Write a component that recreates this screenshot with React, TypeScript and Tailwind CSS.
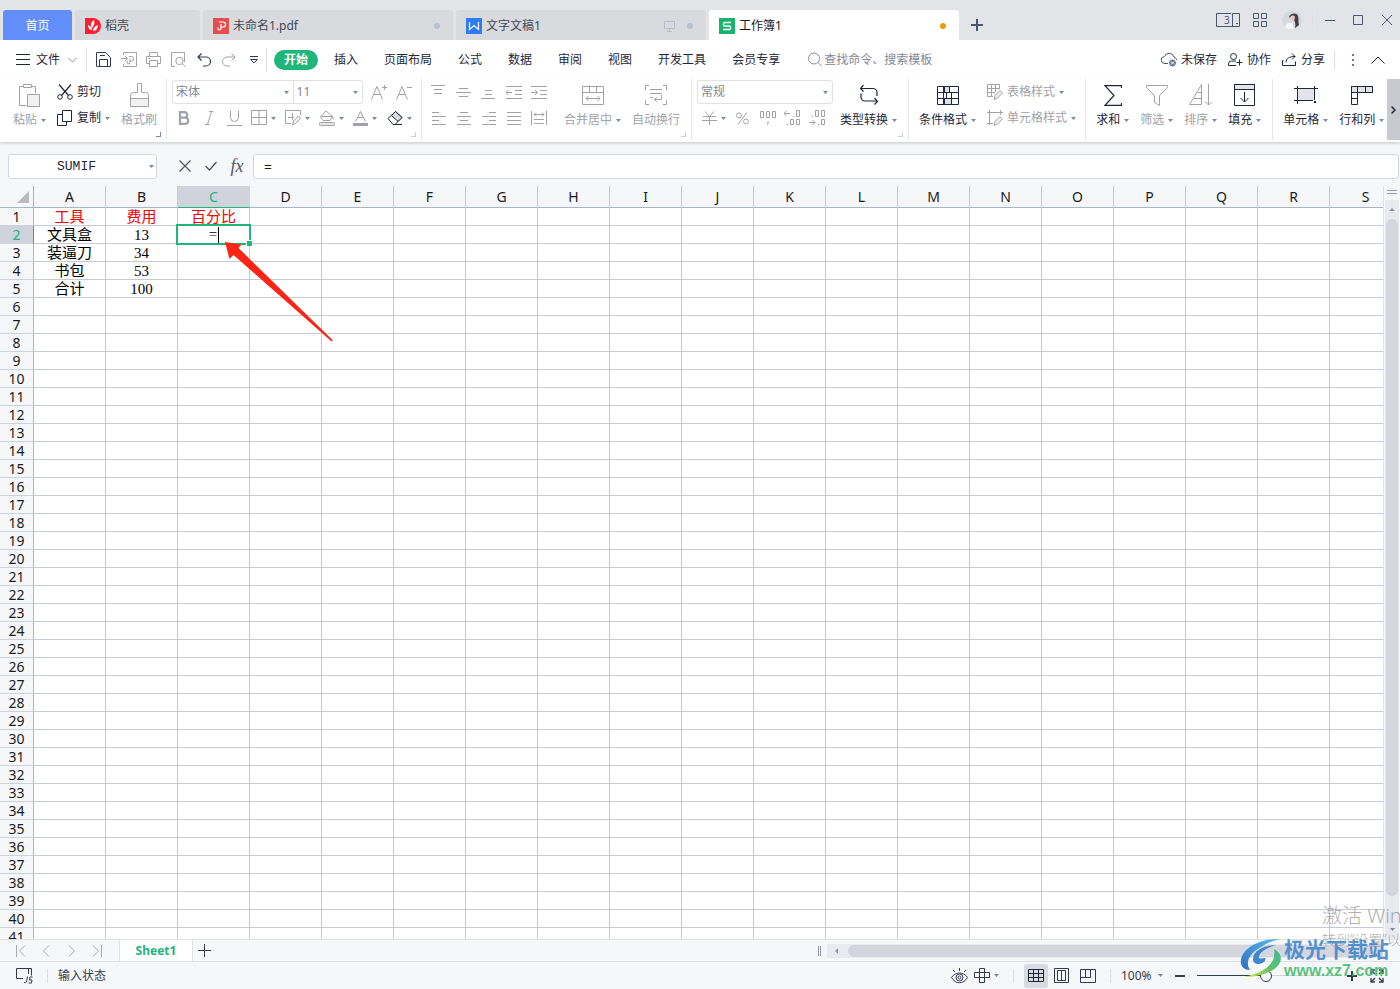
import { useState, type ReactNode } from 'react';

const COLUMNS = 'ABCDEFGHIJKLMNOPQRS'.split('');
const ROWS = Array.from({ length: 41 }, (_, i) => i + 1);

const CELLS: Record<string, string> = {
  A1: '工具', B1: '费用', C1: '百分比',
  A2: '文具盒', B2: '13',
  A3: '装逼刀', B3: '34',
  A4: '书包', B4: '53',
  A5: '合计', B5: '100',
};

const MENUS = ['插入', '页面布局', '公式', '数据', '审阅', '视图', '开发工具', '会员专享'];

const UI_FONT = "font-['Noto_Sans','Noto_Sans_CJK_SC',sans-serif]";
const CELL_FONT = "font-['Liberation_Serif','Noto_Sans_CJK_SC',serif]";

function Icon({ w = 16, h = 16, d, children }: { w?: number; h?: number; d?: string; children?: ReactNode }) {
  return (
    <svg width={w} height={h} viewBox={`0 0 ${w} ${h}`} fill="none" stroke="currentColor" className="shrink-0" aria-hidden="true">
      {d && <path d={d} />}
      {children}
    </svg>
  );
}

function Caret() {
  return (
    <svg width="5" height="3" viewBox="0 0 5 3" className="shrink-0 text-[#7b88a1]" aria-hidden="true">
      <path d="M0 0h5L2.5 3z" fill="currentColor" />
    </svg>
  );
}

function Group({ children, corner, className = '' }: { children: ReactNode; corner?: string; className?: string }) {
  return (
    <div className={`relative flex shrink-0 gap-[11px] border-r border-[#e6e8ec] pt-px ${className}`}>
      {children}
      {corner && (
        <span className={`absolute right-[5px] bottom-[3px] h-[5px] w-[5px] border-r border-b ${corner}`} />
      )}
    </div>
  );
}

function BigButton({ label, icon, caret = true, muted }: { label: string; icon: ReactNode; caret?: boolean; muted?: boolean }) {
  return (
    <button className={`flex shrink-0 flex-col items-center ${muted ? 'text-[#a0a2a8]' : 'text-[#1f2737]'}`}>
      <span className="flex h-[30px] items-center">{icon}</span>
      <span className="flex h-5 items-center gap-1 whitespace-nowrap">
        {label}
        {caret && <Caret />}
      </span>
    </button>
  );
}

function RowButton({ label, icon, caret, muted }: { label: string; icon: ReactNode; caret?: boolean; muted?: boolean }) {
  return (
    <button className={`flex h-6 items-center gap-1 whitespace-nowrap ${muted ? 'text-[#a0a2a8]' : 'text-[#1f2737]'}`}>
      {icon}
      {label}
      {caret && <Caret />}
    </button>
  );
}

function ToolButton({ label, children, dark }: { label: string; children: ReactNode; dark?: boolean }) {
  return (
    <button aria-label={label} className={`flex h-6 w-[25px] items-center justify-center ${dark ? 'text-[#333c4f]' : 'text-[#a0a2a8]'}`}>
      {children}
    </button>
  );
}

function DropButton({ label, children, dark }: { label: string; children: ReactNode; dark?: boolean }) {
  return (
    <button aria-label={label} className={`flex h-6 w-[34px] items-center justify-center gap-1 ${dark ? 'text-[#1f2737]' : 'text-[#a0a2a8]'}`}>
      {children}
      <Caret />
    </button>
  );
}

function Combo({ label, value, className }: { label: string; value: string; className: string }) {
  return (
    <div className={`relative h-6 border border-[#dfe1e6] bg-white ${className}`}>
      <select aria-label={label} defaultValue={value} className="h-full w-full appearance-none bg-transparent px-[3px] text-[#85888f] outline-none">
        <option>{value}</option>
      </select>
      <span className="pointer-events-none absolute top-[10px] right-1">
        <Caret />
      </span>
    </div>
  );
}

function Divider({ className = 'h-5' }: { className?: string }) {
  return <span className={`w-px shrink-0 bg-[#dcdfe5] ${className}`} />;
}

function DocTab({ title, icon, children, active, width }: { title: string; icon: ReactNode; children?: ReactNode; active?: boolean; width: string }) {
  return (
    <button
      className={`flex h-[30px] items-center rounded-t-[3px] pt-px pr-[13px] pl-[10px] ${width} ${
        active ? 'bg-white text-[#1b1b1b]' : 'bg-[#d9dade] text-[#414957]'
      }`}
    >
      {icon}
      <span className="ml-1 flex-1 text-left whitespace-nowrap">{title}</span>
      {children}
    </button>
  );
}

function TitleBar() {
  return (
    <header className="flex h-10 shrink-0 items-end gap-[3px] bg-[#e3e4e8] pl-[3px]">
      <button className="h-[30px] w-[69px] rounded-t-[3px] bg-[#628efa] pt-px text-white">首页</button>
      <DocTab
        title="稻壳"
        width="w-[125px]"
        icon={
          <Icon>
            <path d="M0 0h8a8 8 0 0 1 0 16H0z" fill="#fb2132" stroke="none" />
            <path d="M7 12C4 12 3 9 3 7c2 1 4 2 4 5zM7 10C5 7 6 4 9 2c1 3 0 6-2 8zM8 13c0-3 2-5 5-6 0 3-2 6-5 6z" fill="#fff" stroke="none" />
          </Icon>
        }
      />
      <DocTab
        title="未命名1.pdf"
        width="w-[250px]"
        icon={
          <Icon>
            <path d="M0 0h16v16H0z" fill="#e54f50" stroke="none" />
            <path d="M6 4h4a2.500 2.500 0 0 1 0 5H7M8 6v4.500a1.500 1.500 0 1 1-3 0v-1" stroke="#fff" strokeWidth="1.200" />
          </Icon>
        }
      >
        <span className="h-[6px] w-[6px] rounded-full bg-[#b7c1d3]" />
      </DocTab>
      <DocTab
        title="文字文稿1"
        width="w-[250px]"
        icon={
          <Icon>
            <path d="M0 0h16v16H0z" fill="#2f7bf0" stroke="none" />
            <path d="M3.500 4v7.500L8 7.500l4.500 4V4" stroke="#fff" strokeWidth="1.200" />
          </Icon>
        }
      >
        <span className="mr-3 text-[#b3bdd0]">
          <Icon w={11} h={12} d="M.5 1.500h10v7H.5zM5.500 8.500v3M3 11.500h5" />
        </span>
        <span className="h-[6px] w-[6px] rounded-full bg-[#b7c1d3]" />
      </DocTab>
      <DocTab
        title="工作簿1"
        width="w-[250px]"
        active
        icon={
          <Icon>
            <path d="M0 0h16v16H0z" fill="#17b36f" stroke="none" />
            <path d="M12 4.500H5.500a1 1 0 0 0-1 1V7a1 1 0 0 0 1 1h5a1 1 0 0 1 1 1v1.500a1 1 0 0 1-1 1H4" stroke="#fff" strokeWidth="1.300" />
          </Icon>
        }
      >
        <span className="h-[6px] w-[6px] rounded-full bg-[#eb9a0a]" />
      </DocTab>
      <button aria-label="新建标签" className="flex h-[30px] w-[30px] items-center justify-center text-[#4a5871]">
        <Icon w={12} h={12}>
          <path d="M6 0v12M0 6h12" strokeWidth="2" />
        </Icon>
      </button>
      <div className="ml-auto flex h-full shrink-0 items-center pr-2 text-[#4a5871]">
        <button aria-label="窗口列表" className="mr-[13px]">
          <Icon w={24} h={14}>
            <path d="M15 .5H.5v13H23.500V.5h-7v13M20 10.500h2" />
            <text x="8" y="11" fontSize="10" fill="currentColor" stroke="none">3</text>
          </Icon>
        </button>
        <button aria-label="应用" className="mr-[15px]">
          <Icon w={14} h={14} d="M.5.5h5v5h-5zM8.500.5h5v5h-5zM.5 8.500h5v5h-5zM8.500 8.500h5v5h-5z" />
        </button>
        <button aria-label="账户" className="mr-[10px]">
          <Icon w={20} h={20}>
            <circle cx="10" cy="10" r="10" fill="#d2dce0" stroke="none" />
            <path d="M7 7c1-4 8-5 9-1 1 3 0 6 1 9l-4 3c1-4 0-6-1-8z" fill="#4b3b42" stroke="none" />
            <path d="M8 8c1-3 4-3 5-1l-1 4-3 1z" fill="#ecc9bd" stroke="none" />
            <path d="M3 17c1-4 4-5 7-4l2 6c-4 1-7 0-9-2z" fill="#f5f6f8" stroke="none" />
          </Icon>
        </button>
        <Divider className="h-5 bg-[#c9ccd3]" />
        <button aria-label="最小化" className="ml-3">
          <Icon w={10} h={10} d="M0 5.500h10" />
        </button>
        <button aria-label="最大化" className="ml-[18px]">
          <Icon w={10} h={10} d="M.5.5h9v9h-9z" />
        </button>
        <button aria-label="关闭" className="ml-[19px]">
          <Icon w={10} h={10} d="M0 0l10 10M10 0L0 10" />
        </button>
      </div>
    </header>
  );
}

function MenuBar() {
  return (
    <nav className="flex h-[39px] shrink-0 items-center bg-white pl-4 text-[#1f2737]">
      <button className="flex items-center">
        <Icon w={14} h={11} d="M0 .5h14M0 5.500h14M0 10.500h14" />
        <span className="mr-2 ml-[6px]">文件</span>
        <span className="text-[#8a8f99]">
          <Icon w={9} h={6} d="M0 .5l4.500 4.500L9 .5" />
        </span>
      </button>
      <Divider className="mr-1 ml-[9px] h-6" />
      <ToolButton label="保存" dark>
        <Icon w={15} h={15} d="M1.500 14.500h-1V.5h9l5 5v9h-13M3.500 14V7.500h8V14M4 3.500h5" />
      </ToolButton>
      <ToolButton label="输出为PDF">
        <Icon d="M2.500 3V.5h13v14h-13V12M0 6.500h6M4 4l2.500 2.500L4 9M8 4.500h2.500a2 2 0 0 1 0 4.500H9M9 6.500V10a1.500 1.500 0 1 1-2-1" />
      </ToolButton>
      <ToolButton label="打印">
        <Icon w={15} h={15} d="M3.500 4V.5h8V4M3 11.500H.5v-7h14v7H12M3.500 8.500h8v6h-8zM2.500 6.500h2" />
      </ToolButton>
      <ToolButton label="打印预览">
        <Icon w={15} h={16}>
          <path d="M4 14.500H.5V.5h13V10M11 11.500l3.500 3.500" />
          <circle cx="8.500" cy="9" r="3.700" />
        </Icon>
      </ToolButton>
      <ToolButton label="撤消" dark>
        <Icon w={14} h={14}>
          <path d="M4.500.5L1 4l3.500 3.500M1 4h8a4.500 4.500 0 0 1 0 9H6" strokeWidth="1.200" />
        </Icon>
      </ToolButton>
      <ToolButton label="恢复">
        <Icon w={14} h={14} d="M9.500.5L13 4 9.500 7.500M13 4H5a4.500 4.500 0 0 0 0 9h3" />
      </ToolButton>
      <ToolButton label="更多" dark>
        <Icon w={8} h={8} d="M0 .5h8M.5 3.500L4 7l3.500-3.500z" />
      </ToolButton>
      <Divider className="mr-[7px] h-6" />
      <button className="mr-[3px] h-5 w-11 rounded-full bg-[#20b57a] font-bold text-white">开始</button>
      {MENUS.map((name) => (
        <button key={name} className="px-[13px] whitespace-nowrap">{name}</button>
      ))}
      <label className="ml-[15px] flex items-center gap-[2px] text-[#8490a6]">
        <Icon w={14} h={15}>
          <circle cx="6" cy="6.500" r="5.500" />
          <path d="M10 10.500l4 4" />
        </Icon>
        <input aria-label="搜索" placeholder="查找命令、搜索模板" className="w-[120px] outline-none placeholder:text-[#7f8899]" />
      </label>
      <div className="ml-auto flex shrink-0 items-center pr-[15px]">
        <button className="mr-[11px] flex items-center gap-1">
          <Icon w={16} h={15}>
            <path d="M7 11.500H4a3.500 3.500 0 0 1-.5-7A5 5 0 0 1 13 5c1.500.5 2.500 1.500 2.500 3" stroke="#4a5467" />
            <circle cx="11.500" cy="11" r="4" fill="#6a7793" stroke="#fff" />
            <path d="M10 9.500l3 3M13 9.500l-3 3" stroke="#fff" />
          </Icon>
          未保存
        </button>
        <button className="mr-[11px] flex items-center gap-1">
          <Icon w={15} h={14} d="M5.500.5a3 3 0 1 1 0 6 3 3 0 0 1 0-6zM8 12.500H.5V11a3 3 0 0 1 3-3H8M8.500 9.500h6M11.500 6.500v6" />
          协作
        </button>
        <button className="mr-[9px] flex items-center gap-1">
          <Icon w={15} h={14} d="M1.500 7.500H.5v5h13v-4M4 9.500c0-4 3-6 9-6M10 .5l3 3-3 3" />
          分享
        </button>
        <Divider />
        <button aria-label="更多选项" className="mr-[17px] ml-[17px]">
          <Icon w={2} h={12}>
            <path d="M0 0h2v2H0zM0 5h2v2H0zM0 10h2v2H0z" fill="#6a7793" stroke="none" />
          </Icon>
        </button>
        <button aria-label="收起功能区">
          <Icon w={14} h={8} d="M.5 7.500L7 1l6.500 6.500" />
        </button>
      </div>
    </nav>
  );
}

function Ribbon() {
  return (
    <div className="flex shrink-0 border-b border-[#d9dbe0] bg-white pb-[2px] shadow-sm">
      <div className="flex h-[61px] min-w-0 flex-1 overflow-hidden">
        <Group corner="border-[#7b88a1]" className="pr-[9px] pl-[13px]">
          <BigButton
            muted
            label="粘贴"
            icon={
              <Icon w={21} h={23}>
                <path d="M7.500 21.500h-7V2.500h4M12 2.500h4.500V9M4.500.5h8v3h-8z" />
                <path d="M8.500 10.500h12v12h-12z" fill="#f1f1f2" />
              </Icon>
            }
          />
          <div className="flex flex-col gap-[2px]">
            <RowButton
              label="剪切"
              icon={
                <Icon>
                  <circle cx="3" cy="13" r="2.300" />
                  <circle cx="13" cy="13" r="2.300" />
                  <path d="M2 .5l9.500 11M14 .5l-9.500 11" strokeWidth="1.200" />
                </Icon>
              }
            />
            <RowButton caret label="复制" icon={<Icon d="M5.500.5h9v11h-9zM5 4.500H.5v11h9V12" />} />
          </div>
          <BigButton
            muted
            caret={false}
            label="格式刷"
            icon={
              <Icon w={19} h={24}>
                <path d="M.5 15.500h18v8H.5z" fill="#f1f1f2" />
                <path d="M7.500.5h4v9h4a3 3 0 0 1 3 3v3H.5v-3a3 3 0 0 1 3-3h4z" />
              </Icon>
            }
          />
        </Group>

        <Group corner="border-[#c9ced9]" className="px-[5px]">
          <div className="flex w-[244px] flex-col gap-[2px]">
            <div className="flex">
              <Combo label="字体" value="宋体" className="w-[122px] rounded-l-[3px]" />
              <Combo label="字号" value="11" className="mr-[3px] w-[70px] rounded-r-[3px] border-l-0" />
              <ToolButton label="增大字号">
                <Icon d="M.5 15.500L6 2.500l5.500 13M2.500 10.500h7M13.500 1v5M11 3.500h5" />
              </ToolButton>
              <ToolButton label="减小字号">
                <Icon d="M.5 15.500L6 2.500l5.500 13M2.500 10.500h7M11 3.500h5" />
              </ToolButton>
            </div>
            <div className="flex">
              <ToolButton label="加粗">
                <Icon w={12} h={14}>
                  <path d="M2 1.200h4.500a2.700 2.700 0 0 1 0 5.400H2zM2 6.600h5.200a3 3 0 0 1 0 6.200H2z" strokeWidth="2.200" />
                </Icon>
              </ToolButton>
              <ToolButton label="倾斜">
                <Icon w={9} h={14} d="M4 .5h4.500M0 13.500h4.500M6.500.5l-4 13" />
              </ToolButton>
              <ToolButton label="下划线">
                <Icon w={15} h={15} d="M3.500 0v6.500a4 4 0 0 0 8 0V0M0 14.500h15" />
              </ToolButton>
              <DropButton label="边框">
                <Icon d="M.5.5h15v14H.5zM8 .5v14M.5 7.500h15" />
              </DropButton>
              <DropButton label="绘图边框">
                <Icon>
                  <path d="M15.500 5V.5H.5v13H6M7.500 3v7M3 7.500h6" />
                  <path d="M7.500 15l1-4 5-5 2 2.500-5 5z" fill="#f1f1f2" />
                </Icon>
              </DropButton>
              <DropButton label="填充颜色">
                <Icon>
                  <path d="M7 1l6.500 5.500-2.500 4H4L1.500 7zM2 6.500h12M13.500 6.500l1 3" />
                  <path d="M1.500 12.500h13a1.500 1.500 0 0 1 0 3h-13a1.500 1.500 0 0 1 0-3z" fill="#e6e6e8" />
                </Icon>
              </DropButton>
              <DropButton label="字体颜色">
                <Icon w={15} h={15}>
                  <path d="M2.500 10.500L7.500.5l5 10M4.500 6.500h6" />
                  <path d="M0 12h15v3H0z" fill="currentColor" stroke="none" />
                </Icon>
              </DropButton>
              <DropButton label="清除" dark>
                <Icon>
                  <path d="M1 8.500L8.500 1.500 15 7.500 8 14.500H6z" />
                  <path d="M4.500 5.500l6.500 6 4-4-6.500-6z" fill="#d9dade" />
                  <path d="M6 14.500h9" />
                </Icon>
              </DropButton>
            </div>
          </div>
        </Group>

        <Group corner="border-[#c9ced9]" className="pr-[11px] pl-1">
          <div className="flex w-[127px] flex-col gap-[2px]">
            <div className="flex">
              <ToolButton label="顶端对齐"><Icon w={15} h={14} d="M0 .5h14M3 4.500h8M3 8.500h8" /></ToolButton>
              <ToolButton label="垂直居中"><Icon w={15} h={10} d="M3 1.500h9M0 5.500h15M3 9.500h9" /></ToolButton>
              <ToolButton label="底端对齐"><Icon w={15} h={14} d="M4 5.500h7M4 9.500h7M0 13.500h14" /></ToolButton>
              <ToolButton label="减少缩进"><Icon h={13} d="M0 .5h16M9 4.500h7M9 8.500h7M0 12.500h16M0 6.500h6M2.500 4L0 6.500 2.500 9" /></ToolButton>
              <ToolButton label="增加缩进"><Icon h={13} d="M0 .5h16M9 4.500h7M9 8.500h7M0 12.500h16M0 6.500h6M4 4l2.500 2.500L4 9" /></ToolButton>
            </div>
            <div className="flex">
              <ToolButton label="左对齐"><Icon w={14} h={13} d="M0 .5h7M0 4.500h14M0 8.500h7M0 12.500h14" /></ToolButton>
              <ToolButton label="居中"><Icon w={14} h={13} d="M3 .5h8M0 4.500h14M3 8.500h8M0 12.500h14" /></ToolButton>
              <ToolButton label="右对齐"><Icon w={14} h={13} d="M7 .5h7M0 4.500h14M7 8.500h7M0 12.500h14" /></ToolButton>
              <ToolButton label="两端对齐"><Icon w={14} h={13} d="M0 .5h14M0 4.500h14M0 8.500h14M0 12.500h14" /></ToolButton>
              <ToolButton label="分散对齐"><Icon h={14} d="M.5 0v14M15.500 0v14M3 3.500h10M5 1.500l-2 2 2 2M11 1.500l2 2-2 2M3 8.500h10M3 12.500h10" /></ToolButton>
            </div>
          </div>
          <BigButton muted label="合并居中" icon={<Icon w={22} h={19} d="M.5.5h21v18H.5zM.5 6.500h21M7.500.5v6M14.500.5v6M4 12.500h14M6.500 10L4 12.500 6.500 15M15.500 10l2.500 2.500-2.500 2.500" />} />
          <BigButton muted caret={false} label="自动换行" icon={<Icon w={22} h={20} d="M4 .5H.5V5M18 .5h3.500V5M.5 15v4.500H4M21.500 15v4.500H18M5 4.500h12M5 8.500h12M16.500 10v4.500h-7M12 12l-2.500 2.500L12 17M5 12.500h3" />} />
        </Group>

        <Group corner="border-[#c9ced9]" className="pr-[11px] pl-[5px]">
          <div className="flex w-[132px] flex-col gap-[2px]">
            <Combo label="数字格式" value="常规" className="w-[136px] rounded-[3px]" />
            <div className="flex">
              <DropButton label="货币"><Icon w={15} h={14} d="M3 .5l4.500 5L12 .5M1 5.500h13M0 9.500h15M7.500 5.500V14" /></DropButton>
              <ToolButton label="百分比">
                <Icon w={13} h={13}>
                  <circle cx="3" cy="3.500" r="2.500" />
                  <circle cx="10" cy="9.500" r="2.500" />
                  <path d="M11 .5L2 12.500" />
                </Icon>
              </ToolButton>
              <ToolButton label="千位分隔"><Icon w={17} h={15} d="M1.500.5h3v6h-3zM7.500.5h3v6h-3zM13.500.5h3v6h-3zM9 10v2.500L8 14" /></ToolButton>
              <ToolButton label="增加小数"><Icon d="M0 3.500h6M2.500 1L0 3.500 2.500 6M9.500 6v1M12.500.5h3v6h-3zM3.500 14v1M6.500 9.500h3v5h-3zM12.500 9.500h3v5h-3z" /></ToolButton>
              <ToolButton label="减少小数"><Icon d="M3.500 6v1M6.500.5h3v6h-3zM12.500.5h3v6h-3zM0 12.500h6M3.500 10L6 12.500 3.500 15M9.500 14v1M12.500 9.500h3v5h-3z" /></ToolButton>
            </div>
          </div>
          <BigButton label="类型转换" icon={
            <Icon w={20} h={20}>
              <path d="M4.500 0L1.500 3.500l3 3M1.500 3.500H14a4 4 0 0 1 4 4V11M2 8.500V12a4 4 0 0 0 4 4h12.500M15.500 13l3 3.500-3 3" strokeWidth="1.200" />
            </Icon>
          } />
        </Group>

        <Group className="pr-[9px] pl-[10px]">
          <BigButton label="条件格式" icon={
            <Icon w={22} h={19}>
              <path d="M.5.5h21v18H.5z" />
              <path d="M7.500.5h5v6h-5zM7.500 12.500h7v6h-7z" fill="#dfe1e8" />
              <path d="M.5 6.500h21M.5 12.500h21M6.500.5v18M12.500.5v6M9.500 6.500v6M14.500 6.500v12" />
            </Icon>
          } />
          <div className="flex flex-col gap-[2px]">
            <RowButton muted caret label="表格样式" icon={
              <Icon>
                <path d="M12.500 5V.5H.5v12H6M.5 4.500h12M.5 8.500H8M4.500.5v12M8.500.5V8" />
                <path d="M7 15.500l1-4 5-5 2.500 2.500-5 5z" fill="#f1f1f2" />
              </Icon>
            } />
            <RowButton muted caret label="单元格样式" icon={
              <Icon>
                <path d="M2.500 0v15M0 2.500h16M13.500 0v5M0 13.500h6" />
                <path d="M7 15.500l1-4 5-5 2.500 2.500-5 5z" fill="#f1f1f2" />
              </Icon>
            } />
          </div>
        </Group>

        <Group className="pr-[11px] pl-[10px]">
          <BigButton label="求和" icon={
            <Icon w={18} h={21}>
              <path d="M17.500 3V.700H1l9 9.800-9 9.800h16.500V18" strokeWidth="1.200" />
            </Icon>
          } />
          <BigButton muted label="筛选" icon={<Icon w={22} h={21} d="M.5.5h21v2l-8 8v10l-5-3v-7l-8-8z" />} />
          <BigButton muted label="排序" icon={<Icon w={23} h={22} d="M.5 20.500L12.500.5v20zM4.500 14.500h8M8.500 8.500h4M19.500 0v21M16 17.500l3.500 3.500 3.500-3.500" />} />
          <BigButton label="填充" icon={
            <Icon w={21} h={22}>
              <path d="M.5.5h20v5H.5z" fill="#e3e4ea" />
              <path d="M.5.5h20v21H.5zM.5 5.500h20M10.500 8v10M6.500 14l4 4 4-4" />
            </Icon>
          } />
        </Group>

        <div className="flex shrink-0 gap-[11px] pt-px pl-[10px]">
          <BigButton label="单元格" icon={
            <Icon w={24} h={18}>
              <path d="M3.500 2.500h17v12h-17z" fill="#e3e4ea" stroke="none" />
              <path d="M3.500 0v18M20.500 0v14M0 2.500h24M0 14.500h19" />
              <path d="M20 15h2v2h-2z" fill="currentColor" stroke="none" />
            </Icon>
          } />
          <BigButton label="行和列" icon={
            <Icon w={22} h={19}>
              <path d="M.5.5h21v6H.5z" fill="#e3e4ea" />
              <path d="M.5.5h21v6H.5zM.5 6.500v12h6v-18M14.500.5v6M.5 12.500h6" />
            </Icon>
          } />
        </div>
      </div>
      <button aria-label="向右滚动" className="flex h-[61px] w-[13px] items-center justify-center bg-[#c9cad0] text-[#1f2737]">
        <Icon w={5} h={8}>
          <path d="M.5.5L4 4 .5 7.500" strokeWidth="1.500" />
        </Icon>
      </button>
    </div>
  );
}

function FormulaBar({ formula, onChange }: { formula: string; onChange: (value: string) => void }) {
  return (
    <div className="flex h-[43px] shrink-0 items-center pt-[3px] pr-px pl-2 text-[#4a5467]">
      <div className="relative h-[25px] w-[149px] rounded-[3px] border border-[#d3d6dd] bg-white">
        <input
          aria-label="名称框"
          defaultValue="SUMIF"
          className="h-full w-full pr-3 text-center text-[13px] text-[#1f2737] outline-none font-['Liberation_Mono',monospace]"
        />
        <span className="pointer-events-none absolute top-[10px] right-[2px]">
          <Caret />
        </span>
      </div>
      <button aria-label="取消" className="ml-[22px]">
        <Icon w={12} h={12}><path d="M.5.5l11 11M11.500.5l-11 11" strokeWidth="1.200" /></Icon>
      </button>
      <button aria-label="输入" className="ml-[14px]">
        <Icon w={12} h={10}><path d="M.5 5l4 4 7-8" strokeWidth="1.300" /></Icon>
      </button>
      <button aria-label="插入函数" className="ml-3 h-6 w-4 text-[18px] leading-5 italic font-['Liberation_Serif',serif]">fx</button>
      <input
        aria-label="编辑栏"
        value={formula}
        onChange={(e) => onChange(e.target.value)}
        className="ml-2 h-[25px] min-w-0 flex-1 rounded-[3px] border border-[#d3d6dd] bg-white px-[10px] text-[14px] text-[#1b1b1b] outline-none"
      />
    </div>
  );
}

function Sheet({ formula, onChange }: { formula: string; onChange: (value: string) => void }) {
  return (
    <div className="min-w-0 flex-1 overflow-hidden">
      <table className="w-[1402px] table-fixed border-separate border-spacing-0">
        <colgroup>
          <col className="w-[34px]" />
          {COLUMNS.map((c) => (
            <col key={c} className="w-[72px]" />
          ))}
        </colgroup>
        <thead>
          <tr className="h-[22px] text-[14px] leading-5 text-[#1b1b1b]">
            <th aria-label="全选" className="border-r border-b border-[#aab3c8] p-0">
              <svg width="12" height="12" viewBox="0 0 12 12" className="ml-auto mr-1" aria-hidden="true">
                <path d="M12 0v12H0z" fill="#b9bbc1" />
              </svg>
            </th>
            {COLUMNS.map((c) => (
              <th
                key={c}
                scope="col"
                className={`border-r border-b p-0 font-normal ${
                  c === 'C'
                    ? 'border-r-[#d0d3dc] border-b-[#20b57a] bg-[#d0d3dc] text-[#20b57a]'
                    : 'border-r-[#c6cbd8] border-b-[#aab3c8]'
                }`}
              >
                {c}
              </th>
            ))}
          </tr>
        </thead>
        <tbody>
          {ROWS.map((r) => (
            <tr key={r} className="h-[18px] text-[15px]">
              <th
                scope="row"
                className={`border-r border-b p-0 text-[14px] leading-[17px] font-normal ${
                  r === 2
                    ? 'border-b-[#d0d3dc] border-r-[#20b57a] bg-[#d0d3dc] text-[#20b57a]'
                    : 'border-b-[#cdd1db] border-r-[#aab3c8] text-[#1b1b1b]'
                }`}
              >
                {r}
              </th>
              {COLUMNS.map((c) => (
                <td
                  key={c}
                  className={`relative border-r border-b border-[#c5cad6] bg-white p-0 pt-[2px] text-center leading-[15px] whitespace-nowrap ${CELL_FONT} ${
                    r === 1 ? 'text-[#f00000]' : 'text-black'
                  }`}
                >
                  {c + r === 'C2' ? <ActiveCell formula={formula} onChange={onChange} /> : CELLS[c + r]}
                </td>
              ))}
            </tr>
          ))}
        </tbody>
      </table>
    </div>
  );
}

function ActiveCell({ formula, onChange }: { formula: string; onChange: (value: string) => void }) {
  return (
    <>
      <div className="absolute -inset-[2px] z-10 flex items-center justify-center border-2 border-[#20b57a] bg-white">
        <input
          aria-label="C2"
          value={formula}
          onChange={(e) => onChange(e.target.value)}
          className="h-4 w-[9px] text-center text-[15px] outline-none"
        />
        <span className="h-4 w-px bg-black" />
        <span className="absolute -right-[3px] -bottom-[3px] h-[6px] w-[6px] border-t border-l border-white bg-[#20b57a]" />
      </div>
      <svg width="110" height="102" viewBox="0 0 110 102" className="absolute top-[15px] left-[46px] z-20" aria-hidden="true">
        <path d="M1 1L17.500 3.500 14.500 7 108 98.500Q109.500 101 107 100L9.500 14 5.500 18z" fill="#fb2416" />
      </svg>
    </>
  );
}

function SheetBar() {
  return (
    <div className="flex h-[23px] shrink-0 items-center border-y border-[#dfe2e8] pl-4 text-[#a6a8ad]">
      <button aria-label="第一张"><Icon w={10} h={12} d="M.5 0v12M9 .5L3.500 6 9 11.500" /></button>
      <button aria-label="上一张" className="ml-4"><Icon w={8} h={12} d="M7 .5L1.500 6 7 11.500" /></button>
      <button aria-label="下一张" className="ml-[18px]"><Icon w={8} h={12} d="M1 .5L6.500 6 1 11.500" /></button>
      <button aria-label="最后一张" className="ml-4"><Icon w={10} h={12} d="M9.500 0v12M1 .5L6.500 6 1 11.500" /></button>
      <button className="ml-[17px] h-full w-[74px] border-x border-[#dfe2e8] bg-white font-bold text-[#20b57a]">Sheet1</button>
      <button aria-label="新建工作表" className="ml-[5px] text-[#333c4f]"><Icon w={13} h={13} d="M6.500 0v13M0 6.500h13" /></button>
      <div className="ml-auto flex w-[582px] shrink-0 items-center pr-[17px] text-[#8d9ab2]">
        <Icon w={3} h={10} d="M.5 0v10M2.500 0v10" />
        <div className="ml-[6px] flex h-[14px] flex-1 items-center bg-[#e8eaef]">
          <svg width="3" height="6" viewBox="0 0 3 6" className="ml-2" aria-hidden="true">
            <path d="M3 0v6L0 3z" fill="currentColor" />
          </svg>
          <span className="ml-[10px] h-3 flex-1 rounded-l-full bg-[#d3d6de]" />
        </div>
      </div>
    </div>
  );
}

function StatusBar() {
  const [zoom, setZoom] = useState(49);

  return (
    <footer className="flex h-[27px] shrink-0 items-center pr-4 pl-4 text-[#333c4f]">
      <button aria-label="宏">
        <Icon w={17} h={16} d="M7 10.500H.5V.5h15v7M12.500 1v5M9 14.500h-1M11.500 8.500l-1 5.500a1.500 1.500 0 0 1-2 .5M16.500 9h-2.500l-.5 3h2.500l-.5 3h-3" />
      </button>
      <Divider className="mr-[10px] ml-[14px] h-[14px]" />
      <span>输入状态</span>
      <div className="ml-auto flex shrink-0 items-center">
        <button aria-label="护眼模式">
          <Icon w={17} h={16}>
            <path d="M.5 9.500c4-6 12-6 16 0-4 7-12 7-16 0zM8.500 0v3M2 2l2 2M15 2l-2 2" />
            <circle cx="8.500" cy="9.500" r="3.500" />
            <circle cx="8.500" cy="9.500" r="1.500" />
          </Icon>
        </button>
        <button aria-label="阅读模式" className="ml-[6px] flex items-center gap-1">
          <Icon w={16} h={15} d="M5.500.5h5v14h-5zM.5 4.500h15v5H.5z" />
          <Caret />
        </button>
        <Divider className="mr-[10px] ml-[14px] h-[14px]" />
        <button aria-label="普通视图" className="flex h-6 w-6 items-center justify-center rounded-[2px] bg-[#d8dbe2] text-[#1f2737]">
          <Icon w={16} h={13} d="M.5.5h15v12H.5zM.5 4.500h15M.5 8.500h15M5.500.5v12M10.500.5v12" />
        </button>
        <button aria-label="分页预览" className="ml-[6px]">
          <Icon w={15} h={15} d="M.5.5h14v14H.5zM3.500 2.500h8v10h-8zM7.500 2.500v10" />
        </button>
        <button aria-label="页面布局" className="ml-[11px]">
          <Icon w={16} h={14} d="M.5.5h15v13H.5zM5.500.5v8M10.500.5v8M.5 8.500h10" />
        </button>
        <Divider className="mr-[10px] ml-[14px] h-[14px]" />
        <button className="flex items-center gap-1">
          <span className="w-[33px] text-left">100%</span>
          <Caret />
        </button>
        <button aria-label="缩小" className="ml-3"><Icon w={10} h={10}><path d="M0 5h10" strokeWidth="2" /></Icon></button>
        <input
          type="range"
          aria-label="缩放"
          value={zoom}
          onChange={(e) => setZoom(Number(e.target.value))}
          className="ml-3 h-3 w-[140px] appearance-none bg-[linear-gradient(to_right,#333c4f_50%,#cfd3db_50%)] bg-[length:100%_1px] bg-center bg-no-repeat [&::-webkit-slider-thumb]:h-3 [&::-webkit-slider-thumb]:w-3 [&::-webkit-slider-thumb]:appearance-none [&::-webkit-slider-thumb]:rounded-full [&::-webkit-slider-thumb]:border [&::-webkit-slider-thumb]:border-[#333c4f] [&::-webkit-slider-thumb]:bg-[#f6f7f9]"
        />
        <button aria-label="放大" className="ml-[10px]"><Icon w={10} h={10}><path d="M0 5h10M5 0v10" strokeWidth="2" /></Icon></button>
        <button aria-label="全屏" className="ml-[13px]">
          <Icon w={14} h={14}>
            <path d="M1 5V1h4M9 1h4v4M13 9v4H9M5 13H1V9M1 1l4 4M13 1L9 5M13 13L9 9M1 13l4-4" strokeWidth="1.300" />
          </Icon>
        </button>
      </div>
    </footer>
  );
}

function Watermarks() {
  return (
    <div className="pointer-events-none absolute right-0 bottom-0 z-30 h-[90px] w-[160px] overflow-hidden">
      <div className="absolute top-[3px] left-[82px] font-light whitespace-nowrap text-[#8b8b8b]/70">
        <p className="text-[20px] leading-7">激活 Windows</p>
        <p className="text-[14px] leading-5">转到“设置”以激活 Windows。</p>
      </div>
      <div className="absolute top-[38px] left-0 flex items-center gap-[2px]">
        <svg width="42" height="42" viewBox="0 0 42 42" aria-hidden="true">
          <defs>
            <linearGradient id="swirlBlue" x1="0" y1="1" x2="1" y2="0">
              <stop offset="0" stopColor="#2f6fc0" />
              <stop offset="1" stopColor="#55bdf0" />
            </linearGradient>
            <linearGradient id="swirlGreen" x1="0" y1="1" x2="1" y2="0">
              <stop offset="0" stopColor="#e6e23a" />
              <stop offset="0.500" stopColor="#5cc46a" />
              <stop offset="1" stopColor="#3fb8a0" />
            </linearGradient>
          </defs>
          <path d="M40 1C24 0 3 8 1 22c-1 6 3 10 9 10-5-7-1-17 11-23 6-4 12-6 19-8z" fill="url(#swirlBlue)" />
          <path d="M36 7c-12 0-23 6-23 14 0 6 7 6 11 3 2-2 2-4 0-4-3 1-6 1-5-2 2-5 9-9 17-11z" fill="#3f86cf" />
          <path d="M34 11c10 5 9 16-3 22-8 4-17 6-27 6 7-2 12-3 16-5 9-5 16-11 14-23z" fill="url(#swirlGreen)" />
        </svg>
        <div className="font-bold whitespace-nowrap">
          <p className="text-[21px] leading-6 text-[#3b82c9]/85">极光下载站</p>
          <p className="text-[16px] leading-5 text-[#3fb868]/85 font-['Liberation_Sans',sans-serif]">www.xz7.com</p>
        </div>
      </div>
    </div>
  );
}

export default function App() {
  const [formula, setFormula] = useState('=');

  return (
    <div className={`relative flex h-screen flex-col overflow-hidden bg-[#f6f7f9] text-[12px] leading-[18px] ${UI_FONT}`}>
      <TitleBar />
      <MenuBar />
      <Ribbon />
      <FormulaBar formula={formula} onChange={setFormula} />
      <main className="flex min-h-0 flex-1">
        <Sheet formula={formula} onChange={setFormula} />
        <div className="flex w-[17px] shrink-0 flex-col items-center border-l border-[#dfe2e8] text-[#8d9ab2]">
          <span className="my-1 h-[4px] w-[10px] border-y border-[#8d9ab2]" />
          <div className="mt-[2px] flex w-[14px] flex-1 flex-col items-center bg-[#e8eaef]">
            <svg width="6" height="3" viewBox="0 0 6 3" className="my-2" aria-hidden="true">
              <path d="M0 3h6L3 0z" fill="currentColor" />
            </svg>
            <span className="mb-8 w-3 flex-1 rounded-full bg-[#d3d6de]" />
            <span className="mb-2">
              <Caret />
            </span>
          </div>
        </div>
      </main>
      <SheetBar />
      <StatusBar />
      <Watermarks />
    </div>
  );
}
